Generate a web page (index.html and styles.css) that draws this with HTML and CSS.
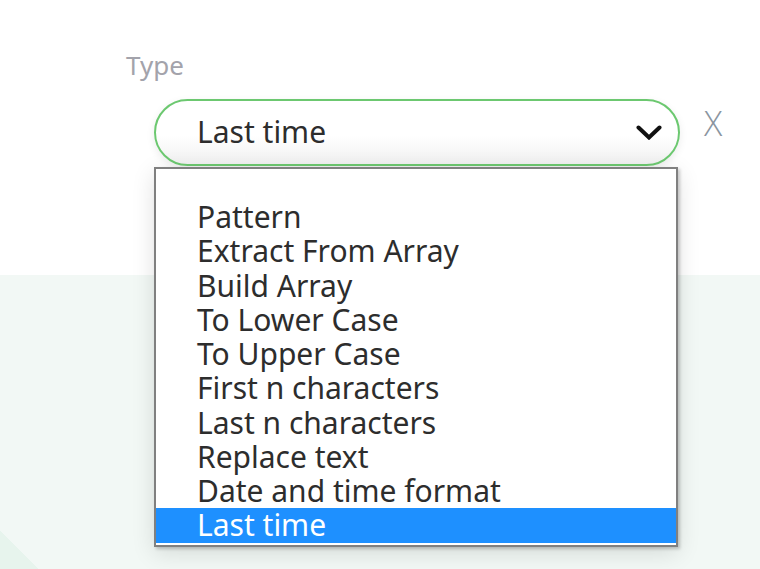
FILE: index.html
```html
<!DOCTYPE html>
<html lang="en">
<head>
<meta charset="utf-8">
<title>Type select</title>
<link rel="stylesheet" href="styles.css">
</head>
<body>
<div class="page">
  <section class="top">
    <div class="field">
      <div class="label">Type</div>
      <div class="row">
        <div class="select-wrap">
          <div class="select">
            <span class="value">Last time</span>
            <svg class="chev" viewBox="0 0 26 15" aria-hidden="true"><polyline points="2.5,2.5 13,12.5 23.5,2.5" /></svg>
          </div>
          <ul class="list">
            <li class="empty"></li>
            <li>Pattern</li>
            <li>Extract From Array</li>
            <li>Build Array</li>
            <li>To Lower Case</li>
            <li>To Upper Case</li>
            <li>First n characters</li>
            <li>Last n characters</li>
            <li>Replace text</li>
            <li>Date and time format</li>
            <li class="sel">Last time</li>
          </ul>
        </div>
        <span class="close">X</span>
      </div>
    </div>
  </section>
  <section class="bottom"></section>
</div>
</body>
</html>
```

FILE: styles.css
```css
html, body {
  margin: 0;
  padding: 0;
}
body {
  font-family: "Noto Sans", "Open Sans", sans-serif;
  background: #fff;
}
.page {
  height: 569px;
  display: flex;
  flex-direction: column;
  overflow: hidden;
}
.top {
  flex: none;
  height: 275px;
  background: #fff;
}
.bottom {
  flex: 1;
  background: linear-gradient(45deg, #e7f4ed 27px, rgba(231, 244, 237, 0) 27px), #f2f8f5;
}
.field {
  padding: 48px 0 0 126px;
}
.label {
  font-size: 26px;
  line-height: 34px;
  color: #a3a3ab;
}
.row {
  display: flex;
  align-items: center;
  gap: 24px;
  margin: 17px 0 0 28px;
}
.select-wrap {
  position: relative;
}
.select {
  box-sizing: border-box;
  width: 526px;
  height: 67px;
  border: 2px solid #6cc870;
  border-radius: 34px;
  display: flex;
  align-items: center;
  justify-content: space-between;
  padding: 0 16px 3px 41px;
  background: linear-gradient(#ffffff 55%, #f1f1f1);
  box-shadow: 0 3px 8px rgba(0, 0, 0, 0.08);
}
.value {
  font-size: 30px;
  color: #2d2d2d;
}
.chev {
  width: 26px;
  height: 15px;
  margin-top: 3px;
}
.chev polyline {
  fill: none;
  stroke: #111;
  stroke-width: 4;
  stroke-linecap: round;
  stroke-linejoin: miter;
}
.list {
  position: absolute;
  left: 0;
  top: 68px;
  width: 524px;
  box-sizing: border-box;
  margin: 0;
  padding: 0 0 2px;
  list-style: none;
  background: #fff;
  border: 2px solid #808080;
  box-shadow: 2px 2px 3px rgba(0, 0, 0, 0.2), 0 6px 22px rgba(0, 0, 0, 0.12);
}
.list li {
  height: 34.25px;
  line-height: 34px;
  padding-left: 41px;
  font-size: 30px;
  color: #2d2d2d;
  white-space: nowrap;
}
.list li.empty {
  height: 31px;
}
.list li.sel {
  background: #1e90ff;
  color: #fff;
}
.close {
  align-self: flex-start;
  margin-top: 8px;
  font-family: "Open Sans", "Noto Sans", sans-serif;
  font-weight: 300;
  font-size: 34px;
  line-height: 33px;
  color: #8a95a0;
}
```
